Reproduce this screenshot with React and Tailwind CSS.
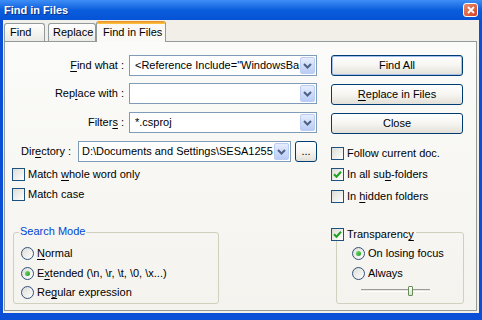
import React from "react";

const U = ({ children }) => (
  <span className="underline decoration-1 underline-offset-[2px]">{children}</span>
);

function Chevron() {
  return (
    <svg width="9" height="6" viewBox="0 0 9 6">
      <path d="M1 1 L4.5 4.5 L8 1" fill="none" stroke="#4d6185" strokeWidth="2" />
    </svg>
  );
}

function Combo({ w, pad, children }) {
  return (
    <div className={`flex h-[21px] items-center border border-[#7f9db9] bg-white ${w}`}>
      <div className={`min-w-0 flex-1 overflow-hidden whitespace-nowrap ${pad}`}>{children}</div>
      <div className="mr-px flex h-[17px] w-[15px] shrink-0 items-center justify-center rounded-[2px] border border-[#bccdf3] bg-gradient-to-b from-[#e6edfd] to-[#b9ccf6]">
        <Chevron />
      </div>
    </div>
  );
}

function Check({ checked }) {
  return (
    <div className="flex h-[13px] w-[13px] shrink-0 items-center justify-center border border-[#1c5180] bg-gradient-to-br from-[#dcdcd7] to-white">
      {checked && (
        <svg width="9" height="9" viewBox="0 0 9 9">
          <path d="M1 4.2 L3.5 6.7 L8 1.8" fill="none" stroke="#21a121" strokeWidth="2" />
        </svg>
      )}
    </div>
  );
}

function Radio({ on }) {
  return (
    <div className="flex h-[13px] w-[13px] shrink-0 items-center justify-center rounded-full border border-[#33507a] bg-gradient-to-br from-[#dcdcd7] to-white">
      {on && <div className="h-[5px] w-[5px] rounded-full bg-gradient-to-br from-[#6ee06a] to-[#1f9a1f]" />}
    </div>
  );
}

function Btn({ children, def, className }) {
  return (
    <div
      className={`flex h-[21px] items-center justify-center rounded-[3px] border border-[#003c74] bg-gradient-to-b from-white via-[#f6f5f1] to-[#e2e0d7] ${
        def ? "shadow-[inset_0_0_0_1px_#a4c0ee]" : ""
      } ${className}`}
    >
      {children}
    </div>
  );
}

function CheckRow({ checked, children, className }) {
  return (
    <div className={`flex h-[13px] items-center ${className}`}>
      <Check checked={checked} />
      <span className="ml-[3px] whitespace-nowrap">{children}</span>
    </div>
  );
}

function RadioRow({ on, children, className }) {
  return (
    <div className={`flex h-[13px] items-center ${className}`}>
      <Radio on={on} />
      <span className="ml-[3px] whitespace-nowrap">{children}</span>
    </div>
  );
}

export default function App() {
  return (
    <div className="flex h-[320px] w-[482px] flex-col overflow-hidden bg-[#0a4fd6] font-['Liberation_Sans',Arial,sans-serif] text-[11px] leading-none text-black">
      {/* Title bar */}
      <div className="flex h-[20px] shrink-0 items-center justify-between bg-gradient-to-b from-[#3d8ef6] via-[#0a5ddc] to-[#0653d6] pl-[4px] pr-[4px]">
        <span className="text-[11px] font-bold text-white [text-shadow:1px_1px_0_#0b2f8a]">Find in Files</span>
        <div className="flex h-[14px] w-[15px] items-center justify-center rounded-[3px] border border-white bg-gradient-to-br from-[#e98a6c] to-[#d4401c]">
          <svg width="8" height="8" viewBox="0 0 8 8">
            <path d="M1 1 L7 7 M7 1 L1 7" stroke="white" strokeWidth="1.8" />
          </svg>
        </div>
      </div>

      {/* Body */}
      <div className="mx-[3px] mb-[7px] flex flex-1 flex-col bg-[#f1efe7] pb-[2px] pl-[1px] pr-[2px] pt-[1px]">
        {/* Tabs */}
        <div className="relative z-10 flex h-[20px] shrink-0 items-end">
          <div className="flex h-[18px] w-[41px] items-center rounded-t-[3px] border border-b-0 border-[#919b9c] bg-gradient-to-b from-white to-[#ebeae4] pl-[5px]">
            Find
          </div>
          <div className="ml-[3px] flex h-[18px] w-[48px] items-center whitespace-nowrap rounded-t-[3px] border border-b-0 border-[#919b9c] bg-gradient-to-b from-white to-[#ebeae4] pl-[4px]">
            Replace
          </div>
          <div className="-mb-px flex h-[21px] w-[70px] flex-col overflow-hidden rounded-t-[3px] border-x border-[#919b9c] bg-[#faf9f6]">
            <div className="h-[3px] shrink-0 bg-gradient-to-b from-[#e68b2c] to-[#ffc83c]" />
            <div className="flex flex-1 items-center pl-[6px] pb-[1px]">Find in Files</div>
          </div>
        </div>

        {/* Panel */}
        <div className="flex flex-1 flex-col border border-[#919b9c] bg-gradient-to-b from-[#fbfbf9] to-[#f4f3ee] pl-[7px] pt-[13px]">
          <div className="flex">
            {/* Left column */}
            <div className="flex w-[305px] flex-col">
              <div className="flex h-[21px] items-center justify-end">
                <span className="mr-[5px]">
                  <U>F</U>ind what :
                </span>
                <Combo w="w-[188px]" pad="pl-[5px]">
                  {'<Reference Include="WindowsBa'}
                </Combo>
              </div>
              <div className="mt-[7px] flex h-[21px] items-center justify-end">
                <span className="mr-[5px]">
                  Rep<U>l</U>ace with :
                </span>
                <Combo w="w-[188px]" pad="pl-[5px]" />
              </div>
              <div className="mt-[8px] flex h-[21px] items-center justify-end">
                <span className="mr-[5px]">
                  Filter<U>s</U> :
                </span>
                <Combo w="w-[188px]" pad="pl-[5px]">
                  *.csproj
                </Combo>
              </div>
              <div className="mt-[8px] flex h-[21px] items-center">
                <span className="w-[66px] shrink-0 pl-[9px]">
                  Dir<U>e</U>ctory :
                </span>
                <Combo w="w-[213px]" pad="pl-[3px]">
                  D:\Documents and Settings\SESA1255
                </Combo>
                <Btn className="ml-[4px] w-[22px] items-end pb-[4px]">...</Btn>
              </div>
              <CheckRow className="mt-[6px]">
                Match <U>w</U>hole word only
              </CheckRow>
              <CheckRow className="mt-[7px]">Match case</CheckRow>
            </div>

            {/* Right column */}
            <div className="ml-[14px] flex w-[133px] flex-col">
              <Btn def className="w-[132px]">Find All</Btn>
              <Btn className="mt-[8px] w-[132px]">
                <U>R</U>eplace in Files
              </Btn>
              <Btn className="mt-[8px] w-[132px]">Close</Btn>
              <CheckRow className="mt-[13px]">Follow current doc.</CheckRow>
              <CheckRow checked className="mt-[8px]">
                In all su<U>b</U>-folders
              </CheckRow>
              <CheckRow className="mt-[9px]">
                In <U>h</U>idden folders
              </CheckRow>
            </div>
          </div>

          {/* Bottom groups */}
          <div className="mt-[29px] flex">
            <div className="relative ml-[1px] flex h-[72px] w-[206px] flex-col rounded-[3px] border border-[#d0d0bf] pl-[7px] pt-[14px]">
              <span className="absolute left-[5px] top-[-7px] bg-[#f6f5f1] px-[1px] text-[#0046d5]">Search Mode</span>
              <RadioRow>
                <U>N</U>ormal
              </RadioRow>
              <RadioRow on className="mt-[7px]">
                E<U>x</U>tended (\n, \r, \t, \0, \x...)
              </RadioRow>
              <RadioRow className="mt-[6px]">
                Re<U>g</U>ular expression
              </RadioRow>
            </div>

            <div className="relative ml-[117px] flex h-[72px] w-[128px] flex-col rounded-[3px] border border-[#d0d0bf] pl-[15px] pt-[14px]">
              <div className="absolute left-[-6px] top-[-5px] flex items-center bg-[#f6f5f1] pr-[2px]">
                <Check checked />
                <span className="ml-[3px]">
                  Transparenc<U>y</U>
                </span>
              </div>
              <RadioRow on>On losing focus</RadioRow>
              <RadioRow className="mt-[7px]">Always</RadioRow>
              <div className="relative ml-[9px] mt-[6px] h-[10px] w-[69px]">
                <div className="absolute left-0 right-0 top-[3px] h-[3px] border-t border-[#9d9c99] border-b border-b-white bg-[#e5e4de]" />
                <div className="absolute left-[47px] top-0 h-[10px] w-[5px] rounded-[1px] border border-[#6b8a5a] bg-gradient-to-b from-white to-[#cfe8c4]" />
              </div>
            </div>
          </div>
        </div>
      </div>
    </div>
  );
}
